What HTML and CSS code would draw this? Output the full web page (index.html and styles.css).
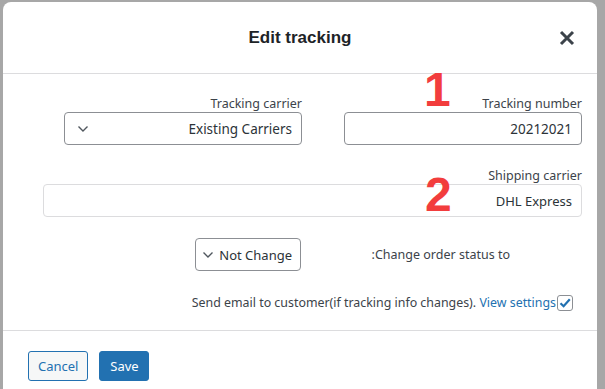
FILE: index.html
```html
<!DOCTYPE html>
<html lang="en">
<head>
<meta charset="utf-8">
<title>Edit tracking</title>
<link rel="stylesheet" href="styles.css">
</head>
<body>
<div class="modal">
  <div class="modal-header">
    <h2 class="modal-title">Edit tracking</h2>
    <button class="close" aria-label="Close">
      <svg width="16" height="16" viewBox="0 0 16 16"><path d="M2 2L14 14M14 2L2 14" stroke="#3c434a" stroke-width="3" stroke-linecap="butt"/></svg>
    </button>
  </div>
  <div class="modal-body">
    <div class="row two-col">
      <div class="field">
        <label class="label">Tracking number</label>
        <div class="input">20212021</div>
      </div>
      <div class="field">
        <label class="label">Tracking carrier</label>
        <div class="input select">
          <span>Existing Carriers</span>
          <svg class="chev" width="12" height="8" viewBox="0 0 12 8"><path d="M1.5 1.5L6 6L10.5 1.5" fill="none" stroke="#50575e" stroke-width="1.4"/></svg>
        </div>
      </div>
    </div>
    <div class="row">
      <div class="field wide">
        <label class="label">Shipping carrier</label>
        <div class="input light">DHL Express</div>
      </div>
    </div>
    <div class="row status-row">
      <div class="status-label">Change order status to:</div>
      <div class="input select small">
        <span>Not Change</span>
        <svg class="chev" width="12" height="8" viewBox="0 0 12 8"><path d="M1.5 1.5L6 6L10.5 1.5" fill="none" stroke="#50575e" stroke-width="1.4"/></svg>
      </div>
    </div>
    <div class="row email-row">
      <span class="checkbox">
        <svg width="14" height="14" viewBox="0 0 14 14"><path d="M2.5 7.2L5.6 10.2L11.8 3.2" fill="none" stroke="#2271b1" stroke-width="2.2"/></svg>
      </span>
      <span class="email-text">Send email to customer(if tracking info changes). <a class="link" href="#">View settings</a></span>
    </div>
    <span class="marker m1">1</span>
    <span class="marker m2">2</span>
  </div>
  <div class="modal-footer">
    <button class="btn btn-secondary">Cancel</button>
    <button class="btn btn-primary">Save</button>
  </div>
</div>
</body>
</html>
```
FILE: styles.css
```css
html, body {
  margin: 0;
  padding: 0;
}
body {
  background: #a7a7a7;
  padding: 2px 0 0 3px;
  height: 389px;
  box-sizing: border-box;
  overflow: hidden;
  font-family: "Noto Sans", "Open Sans", sans-serif;
  color: #3c434a;
}
.modal {
  width: 594px;
  height: 420px;
  background: #fff;
  border-radius: 8px 8px 0 0;
  position: relative;
}
.modal-header {
  height: 71px;
  border-bottom: 1px solid #dcdcde;
  display: flex;
  align-items: center;
  justify-content: center;
  position: relative;
}
.modal-title {
  margin: 0;
  font-family: "Liberation Sans", Arial, sans-serif;
  font-size: 17px;
  font-weight: bold;
  color: #1d2327;
}
.close {
  position: absolute;
  right: 22px;
  top: 28px;
  border: 0;
  background: none;
  padding: 0;
  width: 16px;
  height: 16px;
  display: flex;
}
.modal-body {
  direction: rtl;
  position: relative;
  padding: 22px 15px 0 0;
  height: 257px;
  box-sizing: border-box;
  border-bottom: 1px solid #dcdcde;
}
.row {
  display: flex;
}
.two-col {
  gap: 42px;
}
.field {
  width: 238px;
  display: flex;
  flex-direction: column;
}
.field.wide {
  width: 539px;
  margin-top: 23px;
}
.label {
  font-size: 12.5px;
  line-height: 16px;
  color: #3c434a;
}
.input {
  height: 33px;
  box-sizing: border-box;
  border: 1px solid #8c8f94;
  border-radius: 4px;
  display: flex;
  align-items: center;
  padding: 0 9px;
  font-size: 13.5px;
  color: #2c3338;
  white-space: nowrap;
}
.input.light {
  border-color: #dcdcde;
  font-size: 13px;
}
.select {
  justify-content: space-between;
}
.chev {
  flex: none;
  margin-left: 3px;
}
.status-row {
  margin-top: 21px;
  align-items: center;
  gap: 43px;
}
.status-label {
  width: 238px;
  box-sizing: border-box;
  padding-right: 72px;
  font-size: 12.5px;
}
.input.small {
  width: 106px;
  padding: 0 8px 0 8px;
  justify-content: flex-start;
  gap: 5px;
  direction: ltr;
  flex-direction: row-reverse;
  font-size: 13px;
}
.input.small .chev {
  margin: 0;
}
.email-row {
  margin-top: 23px;
  align-items: center;
  padding-right: 9px;
  gap: 1px;
}
.checkbox {
  width: 14px;
  height: 14px;
  border: 1px solid #8c8f94;
  border-radius: 3px;
  display: flex;
  align-items: center;
  justify-content: center;
}
.email-text {
  font-size: 12.4px;
  direction: ltr;
}
.link {
  color: #2271b1;
  text-decoration: none;
}
.marker {
  position: absolute;
  font-family: "Liberation Sans", Arial, sans-serif;
  font-weight: bold;
  font-size: 48px;
  line-height: 1;
  color: #f23d3d;
}
.m1 {
  left: 421px;
  top: -8px;
}
.m2 {
  left: 422px;
  top: 97px;
}
.modal-footer {
  display: flex;
  gap: 11px;
  padding: 20px 0 0 25px;
}
.btn {
  font-family: "Noto Sans", "Open Sans", sans-serif;
  font-size: 13px;
  height: 30px;
  border-radius: 3px;
  padding: 0 9px;
  cursor: pointer;
}
.btn-secondary {
  background: #f6f7f7;
  border: 1px solid #2271b1;
  color: #2271b1;
}
.btn-primary {
  min-width: 50px;
  background: #2271b1;
  border: 1px solid #2271b1;
  color: #fff;
}
```
